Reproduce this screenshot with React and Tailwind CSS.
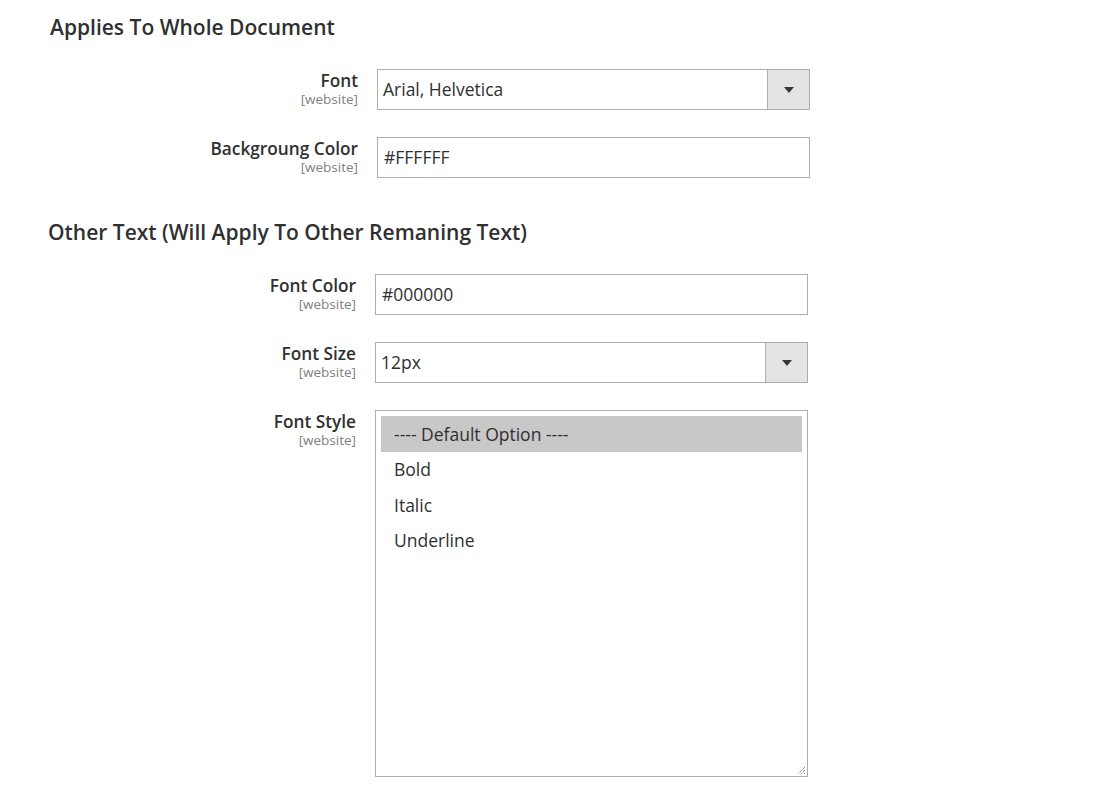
import React from 'react';

const font = { fontFamily: '"Open Sans", "Liberation Sans", sans-serif' };

const Label = ({ title }) => (
  <div className="w-[308px] shrink-0 pt-[1px] text-right">
    <div className="text-[17.25px] leading-[22px] font-semibold text-[#303030]">{title}</div>
    <div className="text-[13.5px] leading-[15px] text-[#808080]">[website]</div>
  </div>
);

const Arrow = () => (
  <svg width="10" height="6" viewBox="0 0 10 6">
    <path d="M0 0 L10 0 L5 6 Z" fill="#41362f" />
  </svg>
);

const TextField = ({ value }) => (
  <div className="w-[433px] h-[41px] border border-[#adadad] bg-white flex items-center pl-[6px] text-[17.5px] text-[#303030]">
    {value}
  </div>
);

const SelectField = ({ value }) => (
  <div className="w-[433px] h-[41px] border border-[#adadad] bg-white flex items-stretch text-[17.5px] text-[#303030]">
    <div className="flex-1 flex items-center pl-[5px]">{value}</div>
    <div className="w-[42px] border-l border-[#adadad] bg-[#e3e3e3] flex items-center justify-center">
      <Arrow />
    </div>
  </div>
);

const MultiSelect = ({ options, selected }) => (
  <div className="relative w-[433px] h-[367px] border border-[#adadad] bg-white p-[5px] text-[17.5px] text-[#303030]">
    {options.map((o, i) => (
      <div
        key={i}
        className={
          'h-[35.5px] flex items-center pl-[13px] ' + (o === selected ? 'bg-[#c8c8c8]' : '')
        }
      >
        {o}
      </div>
    ))}
    <svg className="absolute right-[1px] bottom-[1px]" width="10" height="10" viewBox="0 0 10 10">
      <path d="M9 2 L2 9 M9 5 L5 9 M9 8 L8 9" stroke="#555" strokeWidth="1" strokeDasharray="1 1" />
    </svg>
  </div>
);

const Row = ({ title, children }) => (
  <div className="flex items-start gap-[19px]">
    <Label title={title} />
    {children}
  </div>
);

const Heading = ({ children, className = '' }) => (
  <h2 className={['text-[21px] leading-[29px] font-semibold text-[#303030]', className].join(' ')}>
    {children}
  </h2>
);

export default function App() {
  return (
    <div className="min-h-[806px] bg-white pl-[48px] pt-[13px]" style={font}>
      <div className="pl-[2px]">
        <Heading>Applies To Whole Document</Heading>
        <div className="flex flex-col gap-[27px] mt-[27px]">
          <Row title="Font">
            <SelectField value="Arial, Helvetica" />
          </Row>
          <Row title="Backgroung Color">
            <TextField value="#FFFFFF" />
          </Row>
        </div>
      </div>
      <Heading className="mt-[40px]">Other Text (Will Apply To Other Remaning Text)</Heading>
      <div className="flex flex-col gap-[27px] mt-[27px]">
        <Row title="Font Color">
          <TextField value="#000000" />
        </Row>
        <Row title="Font Size">
          <SelectField value="12px" />
        </Row>
        <Row title="Font Style">
          <MultiSelect
            options={['---- Default Option ----', 'Bold', 'Italic', 'Underline']}
            selected="---- Default Option ----"
          />
        </Row>
      </div>
    </div>
  );
}
